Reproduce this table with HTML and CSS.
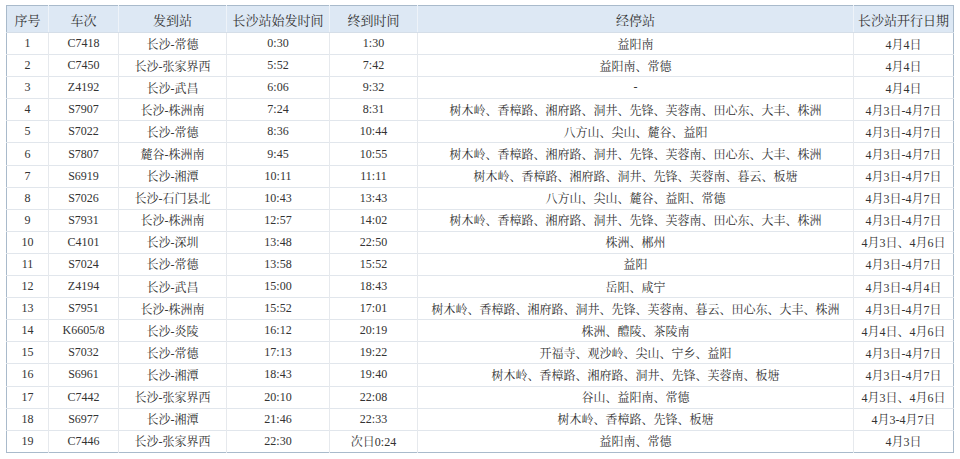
FILE: index.html
```html
<!DOCTYPE html>
<html lang="zh-CN">
<head>
<meta charset="utf-8">
<title>长沙站列车时刻</title>
<link rel="stylesheet" href="styles.css">
</head>
<body>
<table class="schedule">
  <colgroup>
    <col class="c-no"><col class="c-train"><col class="c-route"><col class="c-dep"><col class="c-arr"><col class="c-stops"><col class="c-date">
  </colgroup>
  <thead>
    <tr><th>序号</th><th>车次</th><th>发到站</th><th>长沙站始发时间</th><th>终到时间</th><th>经停站</th><th>长沙站开行日期</th></tr>
  </thead>
  <tbody>
    <tr><td>1</td><td>C7418</td><td>长沙-常德</td><td>0:30</td><td>1:30</td><td>益阳南</td><td>4月4日</td></tr>
    <tr><td>2</td><td>C7450</td><td>长沙-张家界西</td><td>5:52</td><td>7:42</td><td>益阳南、常德</td><td>4月4日</td></tr>
    <tr><td>3</td><td>Z4192</td><td>长沙-武昌</td><td>6:06</td><td>9:32</td><td>-</td><td>4月4日</td></tr>
    <tr><td>4</td><td>S7907</td><td>长沙-株洲南</td><td>7:24</td><td>8:31</td><td>树木岭、香樟路、湘府路、洞井、先锋、芙蓉南、田心东、大丰、株洲</td><td>4月3日-4月7日</td></tr>
    <tr><td>5</td><td>S7022</td><td>长沙-常德</td><td>8:36</td><td>10:44</td><td>八方山、尖山、麓谷、益阳</td><td>4月3日-4月7日</td></tr>
    <tr><td>6</td><td>S7807</td><td>麓谷-株洲南</td><td>9:45</td><td>10:55</td><td>树木岭、香樟路、湘府路、洞井、先锋、芙蓉南、田心东、大丰、株洲</td><td>4月3日-4月7日</td></tr>
    <tr><td>7</td><td>S6919</td><td>长沙-湘潭</td><td>10:11</td><td>11:11</td><td>树木岭、香樟路、湘府路、洞井、先锋、芙蓉南、暮云、板塘</td><td>4月3日-4月7日</td></tr>
    <tr><td>8</td><td>S7026</td><td>长沙-石门县北</td><td>10:43</td><td>13:43</td><td>八方山、尖山、麓谷、益阳、常德</td><td>4月3日-4月7日</td></tr>
    <tr><td>9</td><td>S7931</td><td>长沙-株洲南</td><td>12:57</td><td>14:02</td><td>树木岭、香樟路、湘府路、洞井、先锋、芙蓉南、田心东、大丰、株洲</td><td>4月3日-4月7日</td></tr>
    <tr><td>10</td><td>C4101</td><td>长沙-深圳</td><td>13:48</td><td>22:50</td><td>株洲、郴州</td><td>4月3日、4月6日</td></tr>
    <tr><td>11</td><td>S7024</td><td>长沙-常德</td><td>13:58</td><td>15:52</td><td>益阳</td><td>4月3日-4月7日</td></tr>
    <tr><td>12</td><td>Z4194</td><td>长沙-武昌</td><td>15:00</td><td>18:43</td><td>岳阳、咸宁</td><td>4月3日-4月4日</td></tr>
    <tr><td>13</td><td>S7951</td><td>长沙-株洲南</td><td>15:52</td><td>17:01</td><td>树木岭、香樟路、湘府路、洞井、先锋、芙蓉南、暮云、田心东、大丰、株洲</td><td>4月3日-4月7日</td></tr>
    <tr><td>14</td><td>K6605/8</td><td>长沙-炎陵</td><td>16:12</td><td>20:19</td><td>株洲、醴陵、茶陵南</td><td>4月4日、4月6日</td></tr>
    <tr><td>15</td><td>S7032</td><td>长沙-常德</td><td>17:13</td><td>19:22</td><td>开福寺、观沙岭、尖山、宁乡、益阳</td><td>4月3日-4月7日</td></tr>
    <tr><td>16</td><td>S6961</td><td>长沙-湘潭</td><td>18:43</td><td>19:40</td><td>树木岭、香樟路、湘府路、洞井、先锋、芙蓉南、板塘</td><td>4月3日-4月7日</td></tr>
    <tr><td>17</td><td>C7442</td><td>长沙-张家界西</td><td>20:10</td><td>22:08</td><td>谷山、益阳南、常德</td><td>4月3日、4月6日</td></tr>
    <tr><td>18</td><td>S6977</td><td>长沙-湘潭</td><td>21:46</td><td>22:33</td><td>树木岭、香樟路、先锋、板塘</td><td>4月3-4月7日</td></tr>
    <tr><td>19</td><td>C7446</td><td>长沙-张家界西</td><td>22:30</td><td>次日0:24</td><td>益阳南、常德</td><td>4月3日</td></tr>
  </tbody>
</table>
</body>
</html>
```
FILE: styles.css
```css
html, body {
  margin: 0;
  padding: 0;
  background: #ffffff;
}

body {
  padding: 5px 6px;
  font-family: "Liberation Serif", "Noto Serif CJK SC", "Noto Sans CJK SC", serif;
  color: #333333;
}

.schedule {
  width: 947px;
  table-layout: fixed;
  border-collapse: collapse;
  border: 1px solid #a9bacb;
}

.c-no { width: 42px; }
.c-train { width: 70px; }
.c-route { width: 108px; }
.c-dep { width: 103px; }
.c-arr { width: 88px; }
.c-stops { width: 436px; }
.c-date { width: 100px; }

.schedule th {
  height: 26px;
  padding: 0;
  background: #dde8f4;
  font-weight: normal;
  font-size: 13px;
  color: #333333;
  text-align: center;
  border-left: 1px solid #eef3f9;
  border-bottom: 1px solid #d5dee8;
}

.schedule td {
  height: 21.1px;
  padding: 0;
  font-size: 12px;
  text-align: center;
  white-space: nowrap;
  border-top: 1px solid #e1e6ec;
  border-left: 1px solid #e6e9ed;
}

.schedule th:first-child,
.schedule td:first-child {
  border-left: none;
}
```
